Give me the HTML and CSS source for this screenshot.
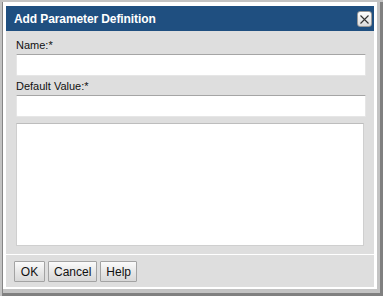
FILE: index.html
```html
<!DOCTYPE html>
<html>
<head>
<meta charset="utf-8">
<link rel="stylesheet" href="styles.css">
</head>
<body>
<div class="frame">
  <div class="dialog">
    <div class="titlebar">
      <span class="title">Add Parameter Definition</span>
      <button class="close" aria-label="Close">
        <svg width="9" height="9" viewBox="0 0 9 9"><path d="M0.5 0.5 L8.5 8.5 M8.5 0.5 L0.5 8.5" stroke="#333" stroke-width="1.1" fill="none"/></svg>
      </button>
    </div>
    <div class="content">
      <div class="fields">
        <div class="field">
          <label class="label">Name:*</label>
          <div class="input"></div>
        </div>
        <div class="field">
          <label class="label">Default Value:*</label>
          <div class="input"></div>
        </div>
        <div class="textarea"></div>
      </div>
      <div class="buttons">
        <button class="btn">OK</button>
        <button class="btn">Cancel</button>
        <button class="btn">Help</button>
      </div>
    </div>
  </div>
</div>
</body>
</html>
```
FILE: styles.css
```css
html, body {
  margin: 0;
  padding: 0;
}
body {
  width: 383px;
  height: 296px;
  background: #c3c3c3;
  overflow: hidden;
  font-family: "Liberation Sans", Arial, sans-serif;
}
.frame {
  box-sizing: border-box;
  margin: 2px 0 0 2px;
  width: 381px;
  height: 294px;
  border-left: 1px solid #858585;
  border-right: 3px solid #808080;
  border-bottom: 3px solid #808080;
  padding: 0 3px 4px 0;
  display: flex;
}
.dialog {
  flex: 1;
  display: flex;
  flex-direction: column;
  background: #dedede;
  border-style: solid;
  border-color: #ffffff;
  border-width: 4px 3px 2px 3px;
}
.titlebar {
  height: 26px;
  background: #1f4f80;
  display: flex;
  align-items: center;
  justify-content: space-between;
  padding: 0 2px 0 8px;
}
.title {
  color: #ffffff;
  font-weight: bold;
  font-size: 12px;
  letter-spacing: -0.1px;
}
.close {
  box-sizing: border-box;
  width: 15px;
  height: 16px;
  padding: 0;
  margin: 1px 0 0 0;
  border: 1px solid #9a9a9a;
  border-radius: 3px;
  background: linear-gradient(#ffffff, #dcdcdc);
  display: flex;
  align-items: center;
  justify-content: center;
}
.close svg {
  display: block;
}
.content {
  flex: 1;
  display: flex;
  flex-direction: column;
}
.fields {
  flex: 1;
  padding: 7px 8px 8px 10px;
  display: flex;
  flex-direction: column;
}
.field {
  display: flex;
  flex-direction: column;
  margin-bottom: 3px;
}
.label {
  font-size: 11px;
  line-height: 14px;
  color: #111;
  margin-bottom: 2px;
}
.input {
  box-sizing: border-box;
  height: 22px;
  background: #ffffff;
  border: 1px solid #e6e6e6;
  border-top-color: #a5a5a5;
  border-radius: 0 0 2px 2px;
}
.textarea {
  box-sizing: border-box;
  margin-top: 3px;
  margin-right: 2px;
  height: 123px;
  background: #ffffff;
  border: 1px solid #cfcfcf;
  border-top-color: #bdbdbd;
}
.buttons {
  border-top: 1px solid #ffffff;
  padding: 6px 0 5px 8px;
  display: flex;
  gap: 3px;
}
.btn {
  box-sizing: border-box;
  height: 21px;
  min-width: 31px;
  padding: 0 5px;
  border: 1px solid #a3a3a3;
  border-radius: 1px;
  background: linear-gradient(#fbfbfb, #e4e4e4 60%, #d8d8d8);
  font-family: "Liberation Sans", Arial, sans-serif;
  font-size: 12px;
  color: #111;
}
```
